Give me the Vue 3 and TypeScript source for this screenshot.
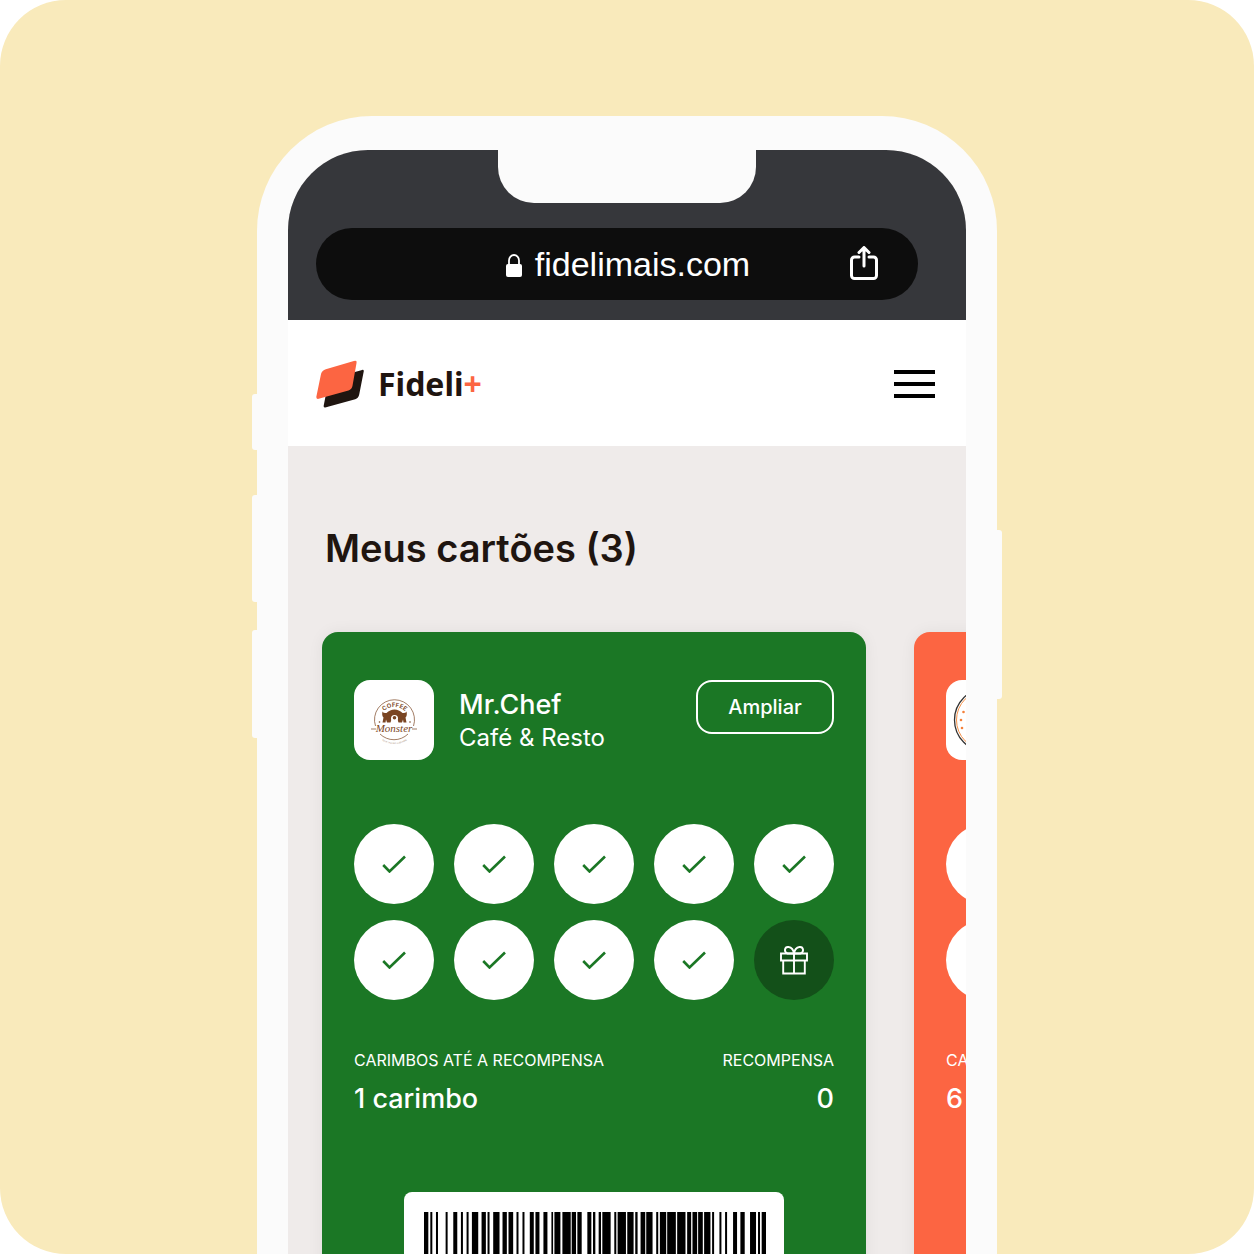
<script setup lang="ts">
interface LoyaltyCard {
  id: string
  name: string
  category: string
  theme: 'green' | 'orange'
  stamped: number
  total: number
  remaining: string
  rewards: number
}

const cards: LoyaltyCard[] = [
  { id: 'chef', name: 'Mr.Chef', category: 'Café & Resto', theme: 'green', stamped: 9, total: 10, remaining: '1 carimbo', rewards: 0 },
  { id: 'pizza', name: 'Pizzaria', category: 'Pizza & Forno', theme: 'orange', stamped: 9, total: 10, remaining: '6 carimbos', rewards: 0 },
]

// Start and width of every bar, in thirds of a pixel
const bars: [number, number][] = [
  [0, 13], [19, 6], [36, 6], [65, 6], [88, 12], [111, 6], [128, 6], [144, 19], [173, 13], [191, 6],
  [208, 19], [236, 13], [254, 14], [278, 6], [296, 6], [318, 12], [335, 12], [359, 12], [383, 5], [392, 18],
  [416, 25], [444, 13], [461, 13], [491, 12], [508, 7], [525, 7], [536, 25], [572, 6], [582, 25], [611, 19],
  [635, 7], [651, 14], [668, 19], [698, 6], [709, 19], [731, 26], [761, 25], [791, 12], [807, 14], [824, 14],
  [842, 19], [866, 6], [888, 6], [905, 6], [929, 12], [951, 13], [980, 18], [1004, 6], [1015, 13],
]
</script>

<template>
  <div class="stage">
    <div class="phone">
      <span class="side side-mute"></span>
      <span class="side side-up"></span>
      <span class="side side-down"></span>
      <span class="side side-power"></span>

      <div class="screen">
        <div class="browser">
          <div class="notch"></div>
          <div class="address">
            <span class="url">
              <svg class="lock" viewBox="0 -4 16 28" width="16" height="28" aria-hidden="true">
                <path d="M3 11V6.500a5 5.500 0 0 1 10 0V11" fill="none" stroke="#fff" stroke-width="1.800" />
                <rect x="0" y="10" width="16" height="13" rx="2" fill="#fff" />
              </svg>
              <span>fidelimais.com</span>
            </span>
            <button class="share" type="button" aria-label="Compartilhar">
              <svg viewBox="0 0 28 36" width="28" height="36" aria-hidden="true">
                <path d="M9 11H4.500a3 3 0 0 0-3 3v15.500a3 3 0 0 0 3 3h19a3 3 0 0 0 3-3V14a3 3 0 0 0-3-3H19M14 20V2M9 6.500L14 1.500l5 5" fill="none" stroke="#fff" stroke-width="3" stroke-linecap="round" stroke-linejoin="round" />
              </svg>
            </button>
          </div>
        </div>

        <header class="header">
          <a class="brand" href="#">
            <svg viewBox="0 0 142 142" width="48" height="48" aria-hidden="true">
              <path d="M134 30q9-3 7 5l-13 66q-2 12-12 15L30 140q-9 2-7-6l13-66q2-11 12-14z" fill="#1f1510" />
              <path d="M112 3q10-3 8 5l-12 68q-2 11-12 14L8 115q-8 2-7-6l14-68q3-11 14-14z" fill="#fc6542" />
            </svg>
            <span class="brand-name">Fideli<span class="plus">+</span></span>
          </a>
          <button class="menu" type="button" aria-label="Menu">
            <span></span><span></span><span></span>
          </button>
        </header>

        <main class="content">
          <h1>Meus cartões (3)</h1>
          <div class="cards">
            <article v-for="card in cards" :key="card.id" class="card" :class="card.theme">
              <div class="card-head">
                <div class="logo">
                  <svg v-if="card.id === 'chef'" viewBox="0 0 80 80" width="80" height="80" aria-hidden="true">
                    <g fill="none" stroke="#7a4522" stroke-width=".700">
                      <path d="M21.500 46A20 20 0 1 1 59.500 46M26 54A20 20 0 0 0 54 54M17 49h5M58 49h5" />
                      <path id="arc-top" d="M25 39A16 16 0 0 1 56 39" stroke="none" />
                      <path id="arc-bottom" d="M22 54A22 22 0 0 0 59 54" stroke="none" />
                    </g>
                    <text class="logo-arc"><textPath href="#arc-top" startOffset="50%" text-anchor="middle">COFFEE</textPath></text>
                    <path d="M28.500 31.500q1 2 4 1.500Q36 29.500 40.500 29.500T48.500 33q3 .5 4-1.500 1 4-1 6l1 5h-3l-.5-3-1 3h-3.500l-1-3h-6l-1 3H33l-1-3-.5 3h-3l1-5q-2-2-1-6z" fill="#7a4522" />
                    <circle cx="40.500" cy="38.500" r="3.500" fill="#fff" />
                    <circle cx="40.500" cy="37.700" r="1.800" fill="#7a4522" />
                    <circle cx="25.500" cy="42" r=".800" fill="#7a4522" /><circle cx="56" cy="42" r=".800" fill="#7a4522" />
                    <text class="logo-script" x="40" y="52" text-anchor="middle">Monster</text>
                    <text class="logo-tag"><textPath href="#arc-bottom" startOffset="50%" text-anchor="middle">YOUR TAGLINE GOES HERE</textPath></text>
                  </svg>
                  <svg v-else viewBox="0 0 80 80" width="80" height="80" aria-hidden="true">
                    <circle cx="40" cy="40" r="31.500" fill="none" stroke="#333" stroke-width="1.300" />
                    <circle cx="40" cy="40" r="29.500" fill="none" stroke="#f5924a" />
                    <g fill="#f5813a">
                      <circle cx="17.500" cy="32" r="1.300" /><circle cx="15" cy="40" r="1.300" /><circle cx="16" cy="48" r="1.300" />
                    </g>
                  </svg>
                </div>
                <div class="card-title">
                  <h2>{{ card.name }}</h2>
                  <p>{{ card.category }}</p>
                </div>
                <button class="expand" type="button">Ampliar</button>
              </div>

              <ul class="stamps">
                <li v-for="n in card.total" :key="n" class="stamp" :class="{ reward: n > card.stamped }">
                  <svg v-if="n <= card.stamped" viewBox="0 0 24 18" width="24" height="18" aria-hidden="true">
                    <path d="M1.200 10L7.500 16.500 23 1.500" fill="none" stroke="currentColor" stroke-width="2.600" />
                  </svg>
                  <svg v-else viewBox="0 0 30 30" width="30" height="30" aria-hidden="true">
                    <g fill="none" stroke="#fff" stroke-width="1.900">
                      <path d="M2 8.500h26v7H2zM4.200 15.500v13h21.600v-13M15 8.500v20" />
                      <path d="M15 8.500H8.500C4.500 7 5.500 1.500 9.500 2 13 2.500 14.500 5 15 8.500zM15 8.500h6.500C25.500 7 24.500 1.500 20.500 2 17 2.500 15.500 5 15 8.500z" />
                    </g>
                  </svg>
                </li>
              </ul>

              <dl class="totals">
                <div>
                  <dt>CARIMBOS ATÉ A RECOMPENSA</dt>
                  <dd>{{ card.remaining }}</dd>
                </div>
                <div class="rewards">
                  <dt>RECOMPENSA</dt>
                  <dd>{{ card.rewards }}</dd>
                </div>
              </dl>

              <div class="barcode">
                <svg viewBox="0 0 1028 420" preserveAspectRatio="none" role="img" aria-label="Código de barras">
                  <rect v-for="[x, w] in bars" :key="x" :x="x" y="0" :width="w" height="420" />
                </svg>
              </div>
            </article>
          </div>
        </main>
      </div>
    </div>
  </div>
</template>

<style>
body {
  background: #fff;
}
</style>

<style scoped>
* {
  box-sizing: border-box;
}

h1,
h2,
p,
ul,
dl,
dd {
  margin: 0;
  padding: 0;
}

button {
  padding: 0;
  border: 0;
  background: none;
  font: inherit;
  color: inherit;
  cursor: pointer;
}

svg {
  display: block;
}

.stage {
  display: flex;
  justify-content: center;
  height: 100vh;
  padding: 116px 24px 0;
  overflow: hidden;
  border-radius: 66px;
  background: #f9eabb;
  font-family: Inter, "Liberation Sans", sans-serif;
}

.phone {
  position: relative;
  flex: 0 1 740px;
  min-width: 0;
  height: max-content;
  padding: 34px 31px;
  border-radius: 115px;
  background: #fbfbfb;
}

.side {
  position: absolute;
  left: -5px;
  width: 5px;
  border-radius: 3px 0 0 3px;
  background: #fbfbfb;
}

.side-mute {
  top: 278px;
  height: 56px;
}

.side-up {
  top: 379px;
  height: 107px;
}

.side-down {
  top: 514px;
  height: 108px;
}

.side-power {
  top: 414px;
  right: -5px;
  left: auto;
  height: 169px;
  border-radius: 0 3px 3px 0;
}

.screen {
  overflow: hidden;
  border-radius: 80px;
  background: #efebea;
}

.browser {
  padding-bottom: 20px;
  background: #36373b;
}

.notch {
  width: 258px;
  height: 53px;
  margin: 0 auto 25px;
  border-radius: 0 0 36px 36px;
  background: #fbfbfb;
}

.address {
  display: flex;
  align-items: center;
  height: 72px;
  margin: 0 48px 0 28px;
  padding-right: 40px;
  border-radius: 36px;
  background: #0d0d0d;
  color: #fff;
}

.url {
  display: flex;
  flex: 1;
  align-items: center;
  justify-content: center;
  gap: 13px;
  padding-left: 90px;
  font-family: "Liberation Sans", sans-serif;
  font-size: 34px;
  line-height: 40px;
}

.header {
  display: flex;
  align-items: center;
  justify-content: space-between;
  height: 126px;
  padding: 2px 31px 0 28px;
  background: #fff;
}

.brand {
  display: flex;
  align-items: center;
  gap: 14px;
  color: #1f1510;
  text-decoration: none;
}

.brand-name {
  font: 700 32px/40px "Noto Sans", sans-serif;
}

.plus {
  color: #fc6542;
}

.menu {
  display: flex;
  flex-direction: column;
  gap: 8px;
  width: 41px;
}

.menu span {
  height: 4px;
  background: #000;
}

.content {
  padding: 76px 0 0 34px;
}

h1 {
  padding-left: 3px;
  color: #1f1510;
  font-size: 38px;
  font-weight: 600;
  line-height: 52px;
}

.cards {
  display: flex;
  gap: 48px;
  margin-top: 58px;
}

.card {
  flex: 0 0 544px;
  padding: 48px 32px;
  border-radius: 16px;
  box-shadow: 0 0 16px rgba(31, 21, 16, 0.06);
  color: #fff;
}

.green {
  background: #1b7725;
}

.orange {
  background: #fc6542;
}

.card-head {
  display: flex;
  align-items: flex-start;
}

.logo {
  width: 80px;
  height: 80px;
  border-radius: 16px;
  background: #fff;
}

.logo-arc {
  fill: #7a4522;
  font-size: 6px;
  font-weight: 600;
}

.logo-script {
  fill: #7a4522;
  font: italic 11px "Liberation Serif", serif;
}

.logo-tag {
  fill: #a58672;
  font-size: 2px;
}

.card-title {
  flex: 1;
  padding: 8px 0 0 25px;
}

h2 {
  font-size: 27px;
  font-weight: 500;
  line-height: 34px;
}

.card-title p {
  font-size: 24px;
  line-height: 32px;
}

.expand {
  width: 138px;
  height: 54px;
  border: 2px solid #fff;
  border-radius: 16px;
  font-size: 20px;
  font-weight: 500;
}

.stamps {
  display: grid;
  grid-template-columns: repeat(5, 80px);
  gap: 16px 20px;
  margin-top: 64px;
  list-style: none;
}

.stamp {
  display: flex;
  align-items: center;
  justify-content: center;
  height: 80px;
  border-radius: 50%;
  background: #fff;
  color: #1b7725;
}

.stamp.reward {
  background: #135019;
}

.totals {
  display: flex;
  justify-content: space-between;
  margin-top: 48px;
}

.rewards {
  text-align: right;
}

dt {
  font-size: 16px;
  line-height: 24px;
}

dd {
  margin-top: 7px;
  font-size: 27px;
  font-weight: 500;
  line-height: 40px;
}

.barcode {
  width: 380px;
  margin: 73px auto 0;
  padding: 20px 18px 20px 20px;
  border-radius: 8px;
  background: #fff;
}

.barcode svg {
  width: 100%;
  height: 140px;
}
</style>
